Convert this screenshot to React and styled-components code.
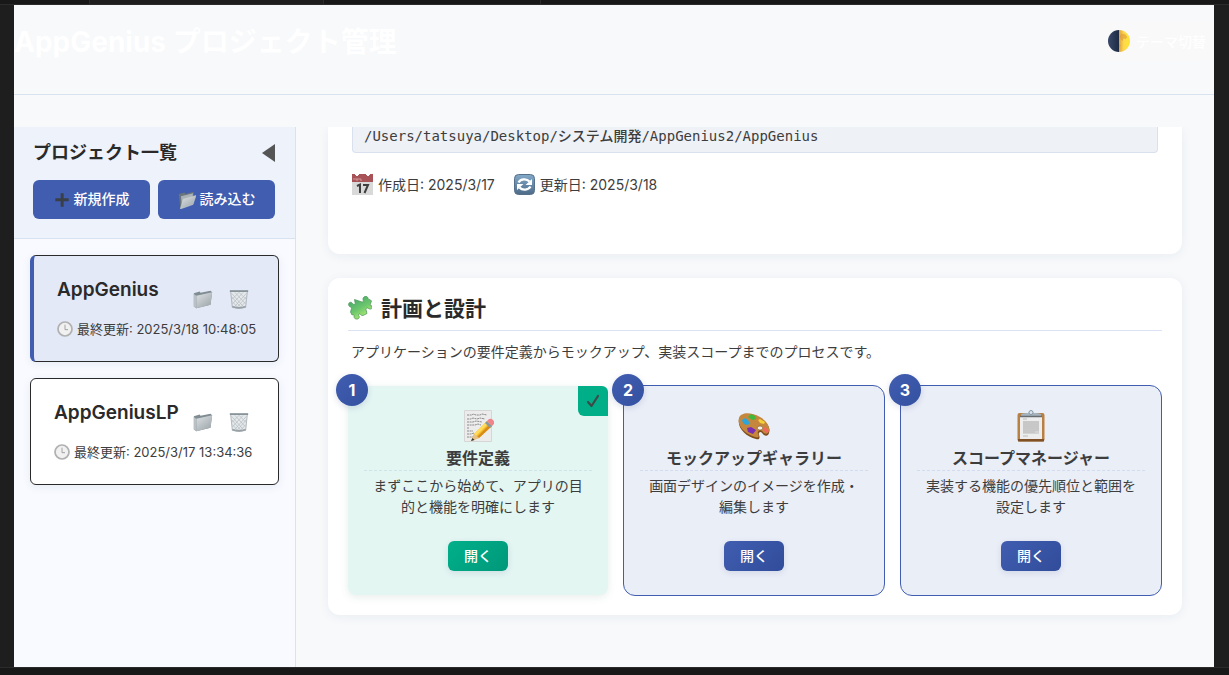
import React from 'react';
import styled, { createGlobalStyle, css } from 'styled-components';

const GlobalStyle = createGlobalStyle`
  *, *::before, *::after { box-sizing: border-box; }
  body {
    margin: 0;
    background: #1e1e1e;
    color: #3d3d3d;
    font-family: Inter, 'Noto Sans CJK JP', sans-serif;
    font-size: 14px;
    line-height: 21px;
  }
  h1, h2, h3, p, ul { margin: 0; padding: 0; }
  button { font-family: inherit; cursor: pointer; border: 0; padding: 0; background: none; color: inherit; }
`;

const primary = '#415db0';
const line = '#d9e3ef';

const Frame = styled.div`
  display: flex;
  flex-direction: column;
  height: 100vh;
`;

const TabStrip = styled.div`
  display: flex;
  flex: none;
  height: 5px;
  background: #181818;
  border-bottom: 1px solid #2b2b2b;
`;

const EditorTab = styled.div`
  width: ${(p) => p.$width}px;
  border-right: 1px solid #2b2b2b;
  background: ${(p) => (p.$active ? '#1e1e1e' : '#181818')};
`;

const StatusStrip = styled.div`
  flex: none;
  height: 8px;
  background: #181818;
  border-top: 1px solid #2b2b2b;
`;

const Page = styled.div`
  display: flex;
  flex-direction: column;
  flex: 1;
  min-height: 0;
  margin: 0 15px 0 14px;
  background: #f7f9fb;
`;

const Header = styled.header`
  display: flex;
  justify-content: space-between;
  align-items: flex-start;
  flex: none;
  height: 90px;
  padding-top: 16px;
  margin-bottom: 32px;
  border-bottom: 1px solid ${line};
`;

const PageTitle = styled.h1`
  color: #fff;
  font-size: 28px;
  line-height: 42px;
  font-weight: 700;
`;

const ThemeButton = styled.button`
  display: flex;
  align-items: center;
  gap: 6px;
  height: 40px;
  padding: 0 8px;
  border-radius: 6px;
  background: #f9f9fa;
  color: #fff;
  font-size: 14px;
  font-weight: 500;
`;

const Body = styled.div`
  display: flex;
  flex: 1;
  min-height: 0;
`;

const Sidebar = styled.aside`
  flex: none;
  width: 282px;
  border-right: 1px solid ${line};
  background: #f8faff;
`;

const SidebarHead = styled.div`
  padding: 11px 20px 19px 19px;
  border-bottom: 1px solid ${line};
  background: #edf2fb;
`;

const SidebarTitleRow = styled.div`
  display: flex;
  justify-content: space-between;
  align-items: center;
  height: 30px;
  margin-bottom: 12px;
`;

const SidebarTitle = styled.h2`
  color: #2a2a2a;
  font-size: 18px;
  line-height: 24px;
  font-weight: 700;
`;

const CollapseButton = styled.button`
  display: flex;
`;

const SidebarActions = styled.div`
  display: flex;
  gap: 8px;
`;

const ActionButton = styled.button`
  display: flex;
  flex: 1;
  align-items: center;
  justify-content: center;
  gap: 4px;
  height: 39px;
  padding-bottom: 3px;
  border-radius: 6px;
  background: ${primary};
  color: #fff;
  font-size: 14px;
  font-weight: 500;

  svg { margin-top: 3px; }
`;

const ProjectList = styled.ul`
  display: flex;
  flex-direction: column;
  gap: 16px;
  padding: 16px;
  list-style: none;
`;

const ProjectCard = styled.li`
  height: 107px;
  padding: 20px 20px 0 23px;
  border: 1px solid #2a2a2a;
  border-radius: 6px;
  background: #fff;
  box-shadow: 0 2px 8px rgba(40, 60, 120, 0.08);
  ${(p) => p.$selected && css`
    border-left: 4px solid ${primary};
    background: #e4e9f7;
  `}
`;

const ProjectTop = styled.div`
  display: flex;
  justify-content: space-between;
  height: 38px;
`;

const ProjectName = styled.h3`
  color: #2a2a2a;
  font-size: 19px;
  line-height: 28px;
  font-weight: 600;
`;

const ProjectTools = styled.div`
  display: flex;
  align-items: center;
  gap: 16px;
  padding: 8px 9px 0 0;
`;

const ToolButton = styled.button`
  display: flex;
`;

const Updated = styled.p`
  display: flex;
  align-items: center;
  gap: 4px;
  font-size: 13px;
  line-height: 30px;
  white-space: nowrap;
`;

const Content = styled.main`
  display: flex;
  flex-direction: column;
  gap: 24px;
  flex: 1;
  min-width: 0;
  padding: 0 32px;
  overflow: hidden;
`;

const Panel = styled.section`
  border-radius: ${(p) => (p.$continued ? '0 0 12px 12px' : '12px')};
  padding: ${(p) => (p.$continued ? '0 24px 59px' : '16px 20px 19px')};
  background: #fff;
  box-shadow: 0 2px 12px rgba(40, 50, 80, 0.06);
`;

const ProjectPath = styled.div`
  height: 26px;
  padding: 0 11px;
  border: 1px solid #d9e1ef;
  border-top: 0;
  border-radius: 0 0 4px 4px;
  background: #eef1f6;
  font-family: 'DejaVu Sans Mono', 'Noto Sans CJK JP', monospace;
  font-size: 14px;
  line-height: 18px;
  font-weight: 500;
`;

const Dates = styled.div`
  display: flex;
  gap: 19px;
  margin-top: 21px;
`;

const DateItem = styled.span`
  display: flex;
  align-items: center;
  gap: 5px;
`;

const PanelTitle = styled.h2`
  display: flex;
  align-items: flex-start;
  gap: 9px;
  height: 37px;
  border-bottom: 1px solid #dbe2f2;
  color: #2a2a2a;
  font-size: 21px;
  line-height: 29px;
  font-weight: 700;

  svg { margin-top: 2px; }
`;

const PanelText = styled.p`
  padding: 10px 3px 23px;
`;

const Steps = styled.div`
  display: flex;
  align-items: center;
  gap: 15px;
`;

const StepCard = styled.article`
  position: relative;
  display: flex;
  flex: 1 1 0;
  flex-direction: column;
  align-items: center;
  min-width: 0;
  padding: 24px 16px;
  border: 1px solid ${primary};
  border-radius: 12px;
  background: #eaeef7;
  text-align: center;
  ${(p) => p.$done && css`
    border: 0;
    border-radius: 8px;
    background: #e4f6f2;
    box-shadow: 0 2px 8px rgba(30, 80, 70, 0.1);
  `}
`;

const StepNumber = styled.span`
  position: absolute;
  top: -12px;
  left: -12px;
  width: 32px;
  border-radius: 50%;
  background: linear-gradient(135deg, #415db0, #3450a0);
  box-shadow: 0 2px 6px rgba(40, 60, 120, 0.16);
  color: #fff;
  font-size: 16px;
  line-height: 32px;
  font-weight: 700;
`;

const DoneMark = styled.span`
  position: absolute;
  top: 0;
  right: 0;
  display: grid;
  place-items: center;
  width: 30px;
  height: 30px;
  border-radius: 0 6px 0 6px;
  background: #00ae88;
`;

const StepTitle = styled.h3`
  align-self: stretch;
  height: 29px;
  border-bottom: 1px dashed ${(p) => (p.$done ? '#cfe4e8' : '#d3dcee')};
  font-size: 16px;
  line-height: 32px;
  font-weight: 700;
`;

const StepText = styled.p`
  padding: 4px 8px 24px;
`;

const OpenButton = styled.button`
  width: 60px;
  height: 30px;
  padding-bottom: 3px;
  border-radius: 6px;
  background: ${(p) => (p.$done
    ? 'linear-gradient(135deg, #00b08a, #00987a)'
    : 'linear-gradient(135deg, #415db0, #304c9a)')};
  box-shadow: 0 2px 6px rgba(40, 60, 120, 0.12);
  color: #fff;
  font-size: 14px;
  font-weight: 500;
`;

const Glyph = styled.svg`
  flex: none;
`;

const Svg = ({ size, box = 24, children }) => (
  <Glyph width={size} height={size} viewBox={`0 0 ${box} ${box}`} aria-hidden="true">{children}</Glyph>
);

const Moon = () => (
  <Svg size={22}>
    <defs>
      <linearGradient id="moonDark"><stop stopColor="#394968" /><stop offset="1" stopColor="#1d2b45" /></linearGradient>
      <linearGradient id="moonLit"><stop stopColor="#dfa040" /><stop offset=".45" stopColor="#ffda4e" /><stop offset="1" stopColor="#ffe52f" /></linearGradient>
    </defs>
    <path d="M12 0a12 12 0 0 0 0 24z" fill="url(#moonDark)" />
    <path d="M12 0a12 12 0 0 1 0 24z" fill="url(#moonLit)" />
    <path d="M14 4l3 0 2 1 2 3-2 2-2-1-1 3-2-2-1-3zM12 15l2 2-2 3z" fill="#d8923b" opacity=".55" />
  </Svg>
);

const Plus = () => (
  <Svg size={16}><path d="M10 2h4.500v7.500H22v4.500h-7.500V22H10v-8H2V9.500h8z" fill="#3a3f47" /></Svg>
);

const FolderGradient = ({ id }) => (
  <linearGradient id={id} x2=".8" y2="1"><stop stopColor="#dde1e4" /><stop offset="1" stopColor="#9ea7ab" /></linearGradient>
);

const OpenFolder = () => (
  <Svg size={18}>
    <defs><FolderGradient id="openFolder" /></defs>
    <path d="M1 4l8-2 1 2 11-3v16L3 23z" fill="#69757a" />
    <path d="M4 7l16-4-1 10L5 19z" fill="#a9b3b7" />
    <path d="M7 11l17-5-4 12L3 24z" fill="url(#openFolder)" stroke="#d5dcde" strokeWidth=".6" />
  </Svg>
);

const Folder = () => (
  <Svg size={20}>
    <defs><FolderGradient id="folder" /></defs>
    <path d="M1 5l7-2 1 1.500L21 2l2 2-2 15L4 23l-3-2z" fill="#7f8c92" />
    <path d="M4 8l19-4-2 15L4 23z" fill="url(#folder)" />
    <path d="M1 6l3 2v15l-3-2z" fill="#b9c1c5" />
  </Svg>
);

const Trash = () => (
  <Svg size={20}>
    <path d="M2 3h20l-2 19q-8 3-16 0z" fill="#e5e9eb" stroke="#a5adb2" />
    <path d="M3 5l15 17M7 4l13 14M12 4l9 9M3 9l12 14M4 15l7 8M21 5L6 22M17 4L4 18M12 4L3 13M21 9L9 23M20 15l-7 8" stroke="#b7bec2" strokeWidth=".9" />
    <path d="M1 2.500h22" stroke="#89949a" strokeWidth="2.200" />
    <path d="M4 21q8 3 16 0" fill="none" stroke="#98a1a6" strokeWidth="2" />
  </Svg>
);

const Clock = () => (
  <Svg size={16}>
    <circle cx="12" cy="12" r="10.500" fill="#f1f1f1" stroke="#b1b1b1" strokeWidth="2.600" />
    <path d="M12 5.500V13h4.500" fill="none" stroke="#979797" strokeWidth="1.300" />
  </Svg>
);

const Calendar = () => (
  <Svg size={21} box={21}>
    <path d="M0 0h21v21H0z" fill="#d9d9d9" />
    <path d="M0 0h21v8H0z" fill="#a75357" />
    <path d="M3 0l2 2 2-2M14 0l2 2 2-2" fill="#fff" stroke="#fff" />
    <path d="M2 4v2M4 4v2h2V4M8 4v2h2" fill="none" stroke="#dca9aa" strokeWidth=".8" />
    <path d="M5 12l3-1.500V19M11 11h5l-3.500 8" fill="none" stroke="#3e3e3e" strokeWidth="2" />
  </Svg>
);

const Refresh = () => (
  <Svg size={21} box={21}>
    <defs><linearGradient id="refresh" x2="0" y2="1"><stop stopColor="#83a9c9" /><stop offset="1" stopColor="#4d6b87" /></linearGradient></defs>
    <rect x=".5" y=".5" width="20" height="20" rx="4" fill="url(#refresh)" stroke="#57718a" />
    <path d="M4.500 8.500a6.500 5.500 0 0 1 11-1M16.500 12.500a6.500 5.500 0 0 1-11 1" fill="none" stroke="#fff" strokeWidth="2.400" />
    <path d="M18 5v6h-6.500zM3 16v-6h6.500z" fill="#fff" />
  </Svg>
);

const Puzzle = () => (
  <Svg size={24}>
    <defs><linearGradient id="puzzle" x2=".6" y2="1"><stop stopColor="#3aa06d" /><stop offset=".6" stopColor="#6cc66c" /><stop offset="1" stopColor="#b2ee74" /></linearGradient></defs>
    <path d="M11 6l3 1c1.500 0 1.500-1 1-2.500C14.500 1.500 19 0 20 3c.3 1.500 1 2 2 1.500l1.500 1.500-1.500 4 2 1c1 2.500-1.500 4-3.500 2.500-1-1-2.500-.5-2.500 1l1 4-4 2c-1.500.3-2-.5-3-1.500-1.500-.5-2 1-1 2 1 1.500-.5 3.500-3 3-2-.5-2-2-2-3.500 0-1-1-1-2-.500L2.500 17l1-3.500c0-1.500-1-1.500-2-2C-.500 9.500 1 6.500 3.500 7.500c1 .5 1.500 2 2.500 2s1.500-.8 1-2L6.500 4.500z" transform="translate(0 -1)" fill="url(#puzzle)" stroke="#4b9356" strokeWidth=".7" />
  </Svg>
);

const Memo = () => (
  <Svg size={32} box={32}>
    <path d="M2.500 .5h27v31h-27z" fill="#ececec" stroke="#d6d6d6" />
    <path d="M5 5h5l1-1 3 1h4l2-1 5 1M5 9h4l2-1 4 1 3-1 5 1M5 12h6l3-1 6 1M5 15h8l3-1 3 1M5 18h2M5 21h6M5 24h4l3-1M5 27h6" fill="none" stroke="#8b8b8b" strokeWidth="1" strokeDasharray="2 .6" />
    <path d="M12 24L25 11l5 5-13 12-8 3z" fill="#f5b82c" />
    <path d="M12 24L25 11l2 2-13 13z" fill="#ffdc5c" />
    <path d="M15 27l13-13 2 2-13 12z" fill="#d98b18" />
    <path d="M12 24l5 4-8 3z" fill="#e7c18b" /><path d="M10.500 28l2 2-3.500 1z" fill="#333" />
    <path d="M23 13l2-2 5 5-2 2z" fill="#8b999c" />
    <path d="M25 11q3-4 6-1 3 3-1 6z" fill="#f0838c" />
  </Svg>
);

const Palette = () => (
  <Svg size={32} box={32}>
    <path d="M1 9C3 3 13 2 22 8c7 4 11 10 9 15-1 4-5 3-7 0-1-2-4-1-3 2 1 2 1 5-3 4C8 27-1 18 1 9z" fill="#7f4d1c" />
    <path d="M1 8C3 2 13 2 22 7c7 4 10 10 9 14-1 4-5 3-7 0-2-2-5 0-4 3 2 3 0 4-3 3C7 24-1 16 1 8z" fill="#c5873e" />
    <ellipse cx="22" cy="18" rx="2.800" ry="2" fill="#f6f1e8" stroke="#80501f" strokeWidth=".6" />
    <path d="M4 10l3-2 3 2 2 4-4 1-3-2z" fill="#2ba6dc" />
    <path d="M10 7l3-3 4 2 1 3-4 1z" fill="#3fb83c" />
    <path d="M20 10l2-1 5 3-1 2-4-1z" fill="#f5cf37" />
    <path d="M25 17l3 1 3 3-2 2-4-3z" fill="#f1665f" />
    <path d="M9 18l4-1 5 3-3 4-5-2z" fill="#7a2fb0" />
  </Svg>
);

const Clipboard = () => (
  <Svg size={32} box={32}>
    <rect x="2.500" y="3" width="27" height="28.500" rx="2" fill="#b98043" />
    <path d="M3 29h26v2.500H3z" fill="#805126" />
    <path d="M5 6h22v23H5z" fill="#ededed" />
    <path d="M8 11h16v13H8z" fill="#d3d3d3" />
    <path d="M8 12h16M8 14h16M8 16h16M8 18h16M8 20h16M8 22h12M8 9h4M8 26h5" stroke="#bcbcbc" strokeWidth="1" />
    <path d="M6 6V4.500q1-1.500 5-1.500h2q3-3 6 0h2q4 0 5 1.500V6z" fill="#a5b4bf" />
    <path d="M5 6.500h22" stroke="#6a6d70" strokeWidth="1.500" />
    <circle cx="16" cy="2.500" r="2" fill="#dce4e9" stroke="#8799a5" />
  </Svg>
);

const projects = [
  { name: 'AppGenius', updated: '2025/3/18 10:48:05', selected: true },
  { name: 'AppGeniusLP', updated: '2025/3/17 13:34:36', selected: false },
];

const steps = [
  { title: '要件定義', text: 'まずここから始めて、アプリの目的と機能を明確にします', Icon: Memo, done: true },
  { title: 'モックアップギャラリー', text: '画面デザインのイメージを作成・編集します', Icon: Palette },
  { title: 'スコープマネージャー', text: '実装する機能の優先順位と範囲を設定します', Icon: Clipboard },
];

export default function App() {
  return (
    <Frame>
      <GlobalStyle />
      <TabStrip>
        <EditorTab $width={90} />
        <EditorTab $width={234} $active />
        <EditorTab $width={217} />
      </TabStrip>
      <Page>
        <Header>
          <PageTitle>AppGenius プロジェクト管理</PageTitle>
          <ThemeButton type="button"><Moon />テーマ切替</ThemeButton>
        </Header>
        <Body>
          <Sidebar>
            <SidebarHead>
              <SidebarTitleRow>
                <SidebarTitle>プロジェクト一覧</SidebarTitle>
                <CollapseButton type="button" aria-label="サイドバーを閉じる">
                  <svg width="13" height="18" viewBox="0 0 13 18"><path d="M13 0v18L0 9z" fill="#555" /></svg>
                </CollapseButton>
              </SidebarTitleRow>
              <SidebarActions>
                <ActionButton type="button"><Plus />新規作成</ActionButton>
                <ActionButton type="button"><OpenFolder />読み込む</ActionButton>
              </SidebarActions>
            </SidebarHead>
            <ProjectList>
              {projects.map((p) => (
                <ProjectCard key={p.name} $selected={p.selected}>
                  <ProjectTop>
                    <ProjectName>{p.name}</ProjectName>
                    <ProjectTools>
                      <ToolButton type="button" aria-label="フォルダを開く"><Folder /></ToolButton>
                      <ToolButton type="button" aria-label="削除"><Trash /></ToolButton>
                    </ProjectTools>
                  </ProjectTop>
                  <Updated><Clock />最終更新: {p.updated}</Updated>
                </ProjectCard>
              ))}
            </ProjectList>
          </Sidebar>
          <Content>
            <Panel $continued>
              <ProjectPath>/Users/tatsuya/Desktop/システム開発/AppGenius2/AppGenius</ProjectPath>
              <Dates>
                <DateItem><Calendar />作成日: 2025/3/17</DateItem>
                <DateItem><Refresh />更新日: 2025/3/18</DateItem>
              </Dates>
            </Panel>
            <Panel>
              <PanelTitle><Puzzle />計画と設計</PanelTitle>
              <PanelText>アプリケーションの要件定義からモックアップ、実装スコープまでのプロセスです。</PanelText>
              <Steps>
                {steps.map(({ title, text, Icon, done }, i) => (
                  <StepCard key={title} $done={done}>
                    <StepNumber>{i + 1}</StepNumber>
                    {done && (
                      <DoneMark>
                        <svg width="14" height="14" viewBox="0 0 14 14" role="img" aria-label="完了"><path d="M2 8l3.500 4L12 2" fill="none" stroke="#3d4a48" strokeWidth="2.200" strokeLinecap="round" strokeLinejoin="round" /></svg>
                      </DoneMark>
                    )}
                    <Icon />
                    <StepTitle $done={done}>{title}</StepTitle>
                    <StepText>{text}</StepText>
                    <OpenButton type="button" $done={done}>開く</OpenButton>
                  </StepCard>
                ))}
              </Steps>
            </Panel>
          </Content>
        </Body>
      </Page>
      <StatusStrip />
    </Frame>
  );
}
